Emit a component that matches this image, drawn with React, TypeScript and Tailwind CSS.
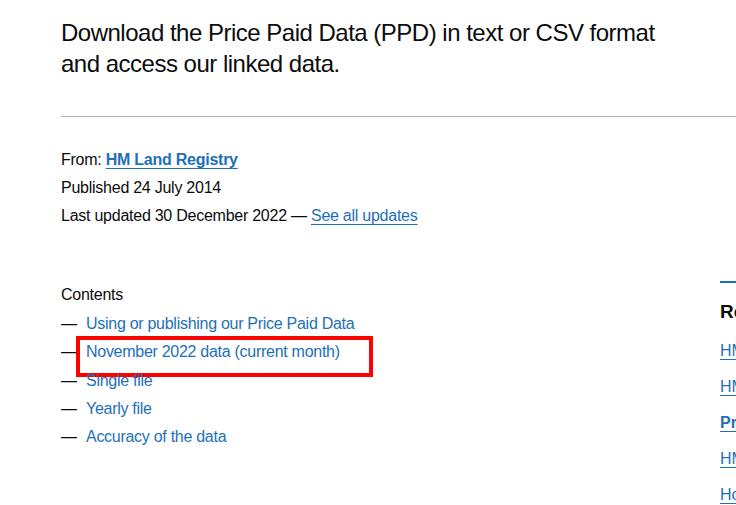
const font = { fontFamily: '"Liberation Sans", Arial, sans-serif' };

const linkClassName = 'text-[#1d70b8] underline underline-offset-[3px] decoration-1';

const contents = [
  'Using or publishing our Price Paid Data',
  'November 2022 data (current month)',
  'Single file',
  'Yearly file',
  'Accuracy of the data',
];

const related = ['HM Land Registry', 'HM Land Registry data', 'Price Paid Data', 'HM Land Registry', 'House price index'];

export default function App() {
  return (
    <div className="h-[505px] w-[736px] overflow-hidden bg-white text-[#0b0c0c]" style={font}>
      <div className="pl-[61px] pt-[17px]">
        <p className="w-[620px] text-[24px] leading-[31px] tracking-[-0.5px]">
          Download the Price Paid Data (PPD) in text or CSV format and access our linked data.
        </p>
        <hr className="mt-[37px] border-0 border-t border-[#b1b4b6]" />

        <div className="mt-[29px] text-[16px] leading-[28px] tracking-[-0.25px]">
          <div>
            From:{' '}
            <a href="#" className={`${linkClassName} font-bold`}>
              HM Land Registry
            </a>
          </div>
          <div>Published 24 July 2014</div>
          <div>
            Last updated 30 December 2022 —{' '}
            <a href="#" className={linkClassName}>
              See all updates
            </a>
          </div>
        </div>

        <div className="mt-[51px] flex">
          <div className="w-[659px] shrink-0">
            <div className="text-[16px] leading-[28px] tracking-[-0.25px]">Contents</div>
            <ul className="mt-[1px] text-[16px] leading-[28.25px] tracking-[-0.28px]">
              {contents.map((item, i) => (
                <li key={item} className="relative flex">
                  <span className="w-[25px] shrink-0">—</span>
                  <a href="#" className="text-[#1d70b8]">
                    {item}
                  </a>
                  {i === 1 && (
                    <span className="absolute left-[15px] top-[-2px] h-[41px] w-[297px] border-4 border-[#ff0000]" />
                  )}
                </li>
              ))}
            </ul>
          </div>

          <div className="w-[300px] shrink-0 border-t-2 border-[#1d70b8] pt-[16px]">
            <div className="text-[19px] font-bold leading-[25px]">Related content</div>
            <ul className="mt-[9px] text-[16px]">
              {related.map((item, i) => (
                <li key={i} className="leading-[36px]">
                  <a href="#" className={`${linkClassName} ${i === 2 ? 'font-bold' : ''}`}>
                    {item}
                  </a>
                </li>
              ))}
            </ul>
          </div>
        </div>
      </div>
    </div>
  );
}
